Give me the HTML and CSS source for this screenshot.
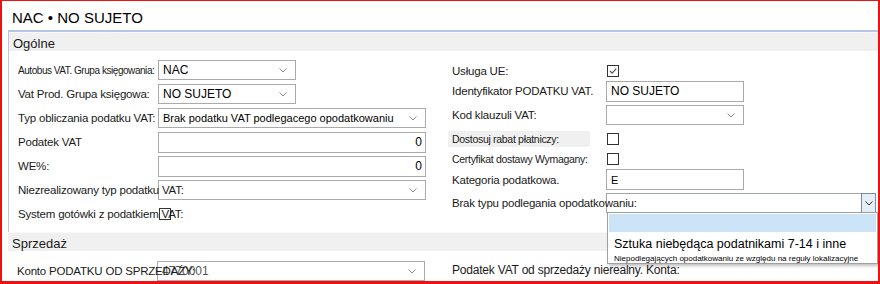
FILE: index.html
```html
<!DOCTYPE html>
<html lang="pl">
<head>
    <meta charset="UTF-8">
    <title>NAC • NO SUJETO</title>
    <link rel="stylesheet" href="styles.css">
</head>
<body>
    <div class="frame">
        <h1 class="title">NAC • NO SUJETO</h1>

        <div class="panel">
            <div class="panel-head">Ogólne</div>
            <div class="panel-body">
                <div class="col-left">
                    <div class="row">
                        <label class="tiny">Autobus VAT. Grupa księgowania:</label>
                        <div class="select narrow"><span>NAC</span><svg class="chev" viewBox="0 0 8 5"><path d="M0.5 0.5 L4 4 L7.5 0.5"/></svg></div>
                    </div>
                    <div class="row">
                        <label>Vat Prod. Grupa księgowa:</label>
                        <div class="select narrow"><span>NO SUJETO</span><svg class="chev" viewBox="0 0 8 5"><path d="M0.5 0.5 L4 4 L7.5 0.5"/></svg></div>
                    </div>
                    <div class="row">
                        <label>Typ obliczania podatku VAT:</label>
                        <div class="select wide"><span class="sm">Brak podatku VAT podlegacego opodatkowaniu</span><svg class="chev" viewBox="0 0 8 5"><path d="M0.5 0.5 L4 4 L7.5 0.5"/></svg></div>
                    </div>
                    <div class="row">
                        <label>Podatek VAT</label>
                        <div class="input wide num">0</div>
                    </div>
                    <div class="row">
                        <label>WE%:</label>
                        <div class="input wide num">0</div>
                    </div>
                    <div class="row">
                        <label class="over">Niezrealizowany typ podatku VAT:</label>
                        <div class="select wide"><span></span><svg class="chev" viewBox="0 0 8 5"><path d="M0.5 0.5 L4 4 L7.5 0.5"/></svg></div>
                    </div>
                    <div class="row">
                        <label class="over">System gotówki z podatkiem VAT:</label>
                        <div class="check"></div>
                    </div>
                </div>

                <div class="col-right">
                    <div class="row">
                        <label>Usługa UE:</label>
                        <div class="check"><svg viewBox="0 0 10 10"><path d="M2 5 L4.2 7.2 L8.2 2.6"/></svg></div>
                    </div>
                    <div class="row">
                        <label>Identyfikator PODATKU VAT.</label>
                        <div class="input narrow">NO SUJETO</div>
                    </div>
                    <div class="row">
                        <label>Kod klauzuli VAT:</label>
                        <div class="select narrow"><span></span><svg class="chev" viewBox="0 0 8 5"><path d="M0.5 0.5 L4 4 L7.5 0.5"/></svg></div>
                    </div>
                    <div class="row">
                        <label class="small shade">Dostosuj rabat płatniczy:</label>
                        <div class="check"></div>
                    </div>
                    <div class="row">
                        <label class="small">Certyfikat dostawy Wymagany:</label>
                        <div class="check"></div>
                    </div>
                    <div class="row">
                        <label>Kategoria podatkowa.</label>
                        <div class="input narrow"><span class="sm">E</span></div>
                    </div>
                    <div class="row">
                        <label class="over">Brak typu podlegania opodatkowaniu:</label>
                        <div class="select full open"><span></span><div class="drop-btn"><svg class="chev" viewBox="0 0 8 5"><path d="M0.5 0.5 L4 4 L7.5 0.5"/></svg></div></div>
                    </div>
                </div>
            </div>
        </div>

        <div class="section-head">Sprzedaż</div>
        <div class="section-body">
            <div class="row">
                <label class="over">Konto PODATKU OD SPRZEDAŻY:</label>
                <div class="select wide"><span class="muted">4770001</span><svg class="chev" viewBox="0 0 8 5"><path d="M0.5 0.5 L4 4 L7.5 0.5"/></svg></div>
            </div>
            <div class="row right-label">
                <label>Podatek VAT od sprzedaży nierealny. Konta:</label>
            </div>
        </div>

        <div class="dropdown">
            <div class="opt selected"></div>
            <div class="opt-main">Sztuka niebędąca podatnikami 7-14 i inne</div>
            <div class="opt-sub">Niepodlegających opodatkowaniu ze względu na reguły lokalizacyjne</div>
        </div>
    </div>
</body>
</html>
```

FILE: styles.css
```css
* {
    box-sizing: border-box;
}
body {
    margin: 0;
    font-family: "Liberation Sans", Arial, sans-serif;
    color: #1a1a1a;
    background: #fff;
}
.frame {
    position: relative;
    width: 880px;
    height: 284px;
    border: solid #ee1111;
    border-width: 1px 2px 3px 2px;
    overflow: hidden;
}
.title {
    margin: 0;
    height: 29px;
    padding: 8px 0 0 10px;
    font-size: 15px;
    font-weight: normal;
    color: #000;
}
.panel {
    margin-left: 6px;
    border-left: 1px solid #b3c6e6;
    border-top: 2px solid #b3c6e6;
}
.panel-head, .section-head {
    height: 19px;
    padding: 3px 0 0 4px;
    font-size: 13px;
    background: #f0f0f0;
    border-top: 1px solid #f8f8f8;
}
.section-head {
    margin-left: 6px;
}
.panel-body {
    display: flex;
    height: 181px;
    padding: 7px 0 0 9px;
    background: #fff;
}
.col-left {
    display: grid;
    grid-template-rows: repeat(7, 24px);
    width: 434px;
}
.col-right {
    display: grid;
    grid-template-rows: 20px 20px 28px 20px 20px 21px 26px;
    margin-top: 3px;
}
.row {
    display: flex;
    align-items: center;
}
label {
    flex: none;
    width: 140px;
    font-size: 11.5px;
    white-space: nowrap;
    letter-spacing: -0.2px;
}
.col-right label {
    width: 154px;
}
label.small {
    font-size: 10.5px;
    letter-spacing: -0.3px;
}
label.tiny {
    font-size: 10px;
    letter-spacing: -0.45px;
}
label.shade {
    background: #f0f0f0;
    margin-left: -4px;
    padding: 2px 4px;
    width: 142px;
    margin-right: 16px;
}
label.over {
    position: relative;
    z-index: 1;
    width: 140px;
    overflow: visible;
}
.col-right label.over {
    width: 154px;
}
.select, .input {
    position: relative;
    flex: none;
    display: flex;
    align-items: center;
    height: 20px;
    padding-left: 4px;
    border: 1px solid #aaaaaa;
    background: #fff;
    font-size: 12px;
    color: #000;
}
.input {
    height: 21px;
}
.narrow {
    width: 138px;
}
.wide {
    width: 268px;
}
.full {
    width: 270px;
}
.num {
    justify-content: flex-end;
    padding-right: 3px;
}
.select span {
    flex: 1;
    white-space: nowrap;
}
.sm {
    font-size: 11px;
}
.muted {
    color: #555;
}
.chev {
    width: 8px;
    height: 5px;
    margin-right: 8px;
    fill: none;
    stroke: #888;
    stroke-width: 1;
}
.check {
    flex: none;
    width: 12px;
    height: 12px;
    border: 1px solid #333;
    background: #fff;
    margin-left: 1px;
}
.check svg {
    display: block;
    width: 10px;
    height: 10px;
    fill: none;
    stroke: #555;
    stroke-width: 1.2;
}
.open {
    border-color: #9ea7b0;
}
.drop-btn {
    display: flex;
    align-items: center;
    justify-content: center;
    width: 15px;
    height: 20px;
    margin: -1px -1px -1px 0;
    border: 1px solid #7f8a96;
    background: #e3eef9;
}
.drop-btn .chev {
    margin: 0;
    stroke: #333;
}
.section-body {
    position: relative;
    height: 30px;
    padding: 10px 0 0 15px;
}
.right-label {
    position: absolute;
    left: 450px;
    top: 12px;
}
.right-label label {
    width: auto;
    font-size: 12px;
}
.dropdown {
    position: absolute;
    left: 605px;
    top: 211px;
    width: 271px;
    height: 52px;
    background: #fff;
    border: 1px solid #a0a0a0;
    box-shadow: 2px 2px 3px rgba(0, 0, 0, 0.25);
}
.opt.selected {
    height: 18px;
    margin: 1px;
    background: #cce4f7;
}
.opt-main {
    padding: 4px 0 0 6px;
    font-size: 12.5px;
    line-height: 15px;
    color: #000;
    white-space: nowrap;
}
.opt-sub {
    padding: 2px 0 0 6px;
    font-size: 8px;
    line-height: 10px;
    color: #000;
    white-space: nowrap;
}
```
